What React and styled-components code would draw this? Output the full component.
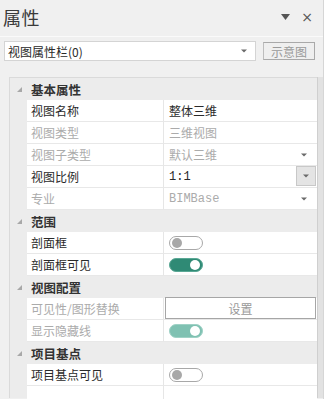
import styled, { createGlobalStyle, css } from 'styled-components';

const GlobalStyle = createGlobalStyle`
  html, body {
    margin: 0;
    padding: 0;
    background: #f0f0f0;
  }
  * { box-sizing: border-box; }
`;

const sections = [
  {
    title: '基本属性',
    rows: [
      { label: '视图名称', value: '整体三维' },
      { label: '视图类型', value: '三维视图', disabled: true },
      { label: '视图子类型', value: '默认三维', disabled: true, arrow: true },
      { label: '视图比例', value: '1:1', mono: true, dropButton: true },
      { label: '专业', value: 'BIMBase', disabled: true, mono: true, arrow: true },
    ],
  },
  {
    title: '范围',
    rows: [
      { label: '剖面框', toggle: 'off' },
      { label: '剖面框可见', toggle: 'on' },
    ],
  },
  {
    title: '视图配置',
    rows: [
      { label: '可见性/图形替换', disabled: true, button: '设置' },
      { label: '显示隐藏线', disabled: true, toggle: 'dim' },
    ],
  },
  {
    title: '项目基点',
    rows: [{ label: '项目基点可见', toggle: 'off' }],
  },
];

function Arrow() {
  return (
    <svg width="6" height="4" viewBox="0 0 6 4">
      <path d="M0 0.5h6L3 3.5z" fill="#6a6a6a" />
    </svg>
  );
}

export default function App() {
  return (
    <Window>
      <GlobalStyle />
      <Header>
        <Title>属性</Title>
        <HeaderTools>
          <svg width="9" height="6" viewBox="0 0 9 6">
            <path d="M0 0h9L4.5 6z" fill="#555" />
          </svg>
          <Close>×</Close>
        </HeaderTools>
      </Header>
      <Toolbar>
        <Combo>
          <span>视图属性栏(0)</span>
          <Arrow />
        </Combo>
        <SketchButton>示意图</SketchButton>
      </Toolbar>
      <Body>
        <Grid>
          {sections.map((s) => (
            <div key={s.title}>
              <CategoryRow>
                <Gutter>
                  <svg width="5" height="5" viewBox="0 0 5 5">
                    <path d="M5 0v5H0z" fill="#a8a8a8" />
                  </svg>
                </Gutter>
                <CategoryTitle>{s.title}</CategoryTitle>
              </CategoryRow>
              {s.rows.map((r) => (
                <Row key={r.label}>
                  <Gutter />
                  <Label $disabled={r.disabled}>{r.label}</Label>
                  <Value $disabled={r.disabled} $mono={r.mono}>
                    {r.value && <span>{r.value}</span>}
                    {r.arrow && <Arrow />}
                    {r.dropButton && (
                      <DropButton>
                        <Arrow />
                      </DropButton>
                    )}
                    {r.toggle && (
                      <Toggle $state={r.toggle}>
                        <Knob $state={r.toggle} />
                      </Toggle>
                    )}
                    {r.button && <CellButton>{r.button}</CellButton>}
                  </Value>
                </Row>
              ))}
            </div>
          ))}
          <Row>
            <Gutter />
            <Label />
            <Value />
          </Row>
        </Grid>
        <SideStrip />
      </Body>
    </Window>
  );
}

const Window = styled.div`
  width: 324px;
  height: 399px;
  overflow: hidden;
  background: #f0f0f0;
  font-family: "Noto Sans CJK SC", "Liberation Sans", sans-serif;
  font-size: 12px;
  color: #2a2a2a;
  border-right: 1px solid #d6d6d6;
`;

const Header = styled.div`
  height: 37px;
  display: flex;
  align-items: center;
  justify-content: space-between;
  padding: 0 10px 2px 3px;
  border-bottom: 1px solid #fafafa;
`;

const Title = styled.div`
  font-size: 18px;
  color: #3a3a3a;
  letter-spacing: 0.5px;
`;

const HeaderTools = styled.div`
  display: flex;
  align-items: center;
  gap: 11px;
  color: #555;
`;

const Close = styled.span`
  font-family: "DejaVu Sans", sans-serif;
  font-size: 14px;
  line-height: 1;
`;

const Toolbar = styled.div`
  display: flex;
  align-items: flex-start;
  gap: 7px;
  padding: 4px 0 0 4px;
  height: 40px;
`;

const Combo = styled.div`
  width: 252px;
  height: 20px;
  background: #fff;
  border: 1px solid #d4d4d4;
  display: flex;
  align-items: center;
  justify-content: space-between;
  padding: 0 8px 0 3px;
  font-size: 12px;
`;

const SketchButton = styled.div`
  width: 52px;
  height: 18px;
  margin-top: 1px;
  border: 1px solid #a9a9a9;
  border-left-color: #bdbdbd;
  background: #efefef;
  color: #9a9a9a;
  font-size: 12px;
  display: flex;
  align-items: center;
  justify-content: center;
`;

const Body = styled.div`
  display: flex;
  padding-left: 9px;
  height: 321px;
`;

const Grid = styled.div`
  width: 308px;
  border-top: 1px solid #dadada;
  border-left: 1px solid #dadada;
  background: #ececec;
`;

const SideStrip = styled.div`
  flex: 1;
  background: #e2e2e2;
  border-left: 1px solid #cfcfcf;
`;

const rowGrid = css`
  display: grid;
  grid-template-columns: 17px 137px 153px;
  height: 22px;
`;

const CategoryRow = styled.div`
  ${rowGrid};
  grid-template-columns: 17px 1fr;
  background: #ececec;
`;

const Gutter = styled.div`
  display: flex;
  align-items: center;
  justify-content: center;
  padding-left: 1px;
`;

const CategoryTitle = styled.div`
  display: flex;
  align-items: center;
  padding-left: 4px;
  font-weight: bold;
  color: #333;
  font-size: 12.5px;
`;

const Row = styled.div`
  ${rowGrid};
`;

const Label = styled.div`
  background: #fff;
  border-bottom: 1px solid #e8e8e8;
  border-right: 1px solid #e6e6e6;
  display: flex;
  align-items: center;
  padding-left: 4px;
  color: ${(p) => (p.$disabled ? '#ababab' : '#2a2a2a')};
  white-space: nowrap;
`;

const Value = styled.div`
  background: #fff;
  border-bottom: 1px solid #e8e8e8;
  display: flex;
  align-items: center;
  justify-content: space-between;
  padding: 0 10px 0 5px;
  color: ${(p) => (p.$disabled ? '#ababab' : '#2a2a2a')};
  font-family: ${(p) =>
    p.$mono ? '"Liberation Mono", monospace' : 'inherit'};
  position: relative;
`;

const DropButton = styled.div`
  position: absolute;
  right: 1px;
  top: 0;
  width: 20px;
  height: 20px;
  background: #e4e4e4;
  border: 1px solid #c8c8c8;
  display: flex;
  align-items: center;
  justify-content: center;
`;

const toggleColors = {
  off: { bg: '#fff', border: '#a8a8a8', knob: '#a8a8a8' },
  on: { bg: '#2f8a75', border: '#5aa895', knob: '#fff' },
  dim: { bg: '#7fc1b2', border: '#9fd2c6', knob: '#fff' },
};

const Toggle = styled.div`
  width: 34px;
  height: 14px;
  border-radius: 7px;
  background: ${(p) => toggleColors[p.$state].bg};
  border: 1px solid ${(p) => toggleColors[p.$state].border};
  position: relative;
`;

const Knob = styled.div`
  position: absolute;
  top: 1px;
  ${(p) => (p.$state === 'off' ? 'left: 2px;' : 'right: 2px;')}
  width: 10px;
  height: 10px;
  border-radius: 50%;
  background: ${(p) => toggleColors[p.$state].knob};
`;

const CellButton = styled.div`
  position: absolute;
  left: 1px;
  right: 1px;
  top: -1px;
  height: 22px;
  border: 1px solid #a6a6a6;
  background: #fff;
  color: #9a9a9a;
  display: flex;
  align-items: center;
  justify-content: center;
  font-family: "Noto Sans CJK SC", sans-serif;
`;
